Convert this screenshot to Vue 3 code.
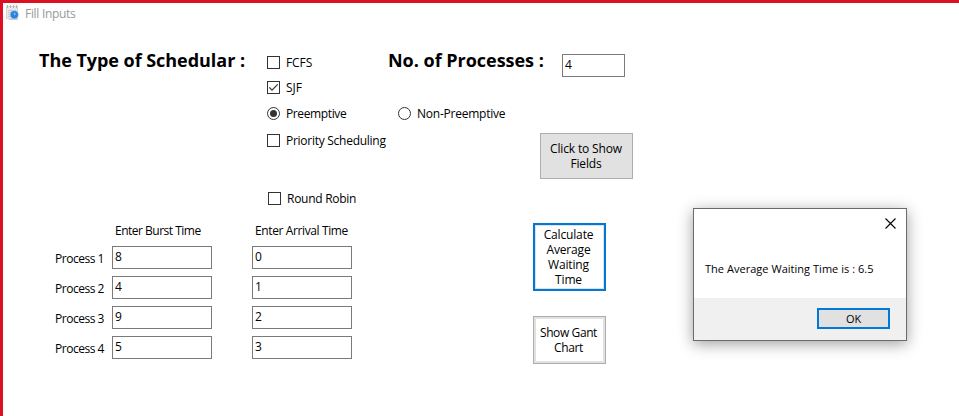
<script setup>
import { ref } from 'vue'

const processCount = ref('4')
const rows = ref([
  { name: 'Process 1', burst: '8', arrival: '0' },
  { name: 'Process 2', burst: '4', arrival: '1' },
  { name: 'Process 3', burst: '9', arrival: '2' },
  { name: 'Process 4', burst: '5', arrival: '3' },
])
const calculateLines = ['Calculate', 'Average', 'Waiting', 'Time']
const ganttLines = ['Show Gant', 'Chart']
const fieldLines = ['Click to Show', 'Fields']
</script>

<template>
  <div class="window">
    <header class="titlebar">
      <svg class="app-icon" width="14" height="17" viewBox="0 0 14 17">
        <rect x="0.5" y="2.5" width="11" height="12" fill="#e9e9e9" stroke="#d6d6d6" />
        <path d="M1.5 1v3M4.5 1v3M7.5 1v3M10.5 1v3" stroke="#b5b5b5" />
        <path d="M2 6.5h8M2 8.5h8M2 10.5h5M2 12.5h5" stroke="#c8c8c8" />
        <path d="M3 15.5h9" stroke="#cccccc" />
        <circle cx="8.3" cy="10.8" r="4.5" fill="#a9c9ef" />
        <circle cx="8.3" cy="10.8" r="3.7" fill="#2c80df" />
        <path d="M8.3 8.5v2.3l1.7-1" fill="none" stroke="#83c4fa" />
      </svg>
      <span class="title">Fill Inputs</span>
    </header>

    <section class="options">
      <h1 class="heading type">The Type of Schedular :</h1>
      <label class="choice fcfs"><i class="box"></i><span>FCFS</span></label>
      <div class="count">
        <h1 class="heading number">No. of Processes :</h1>
        <input v-model="processCount" class="field small" />
      </div>
      <label class="choice sjf">
        <i class="box"><svg width="11" height="11" viewBox="0 0 11 11"><path d="M1.3 5.4 4 8.1 9.7 2.4" fill="none" stroke="#333" stroke-width="1.2" /></svg></i>
        <span>SJF</span>
      </label>
      <label class="choice pre"><i class="box round"><b class="dot"></b></i><span>Preemptive</span></label>
      <label class="choice nonpre"><i class="box round"></i><span>Non-Preemptive</span></label>
      <label class="choice priority"><i class="box"></i><span>Priority Scheduling</span></label>
      <button class="btn show-fields"><span v-for="line in fieldLines" :key="line" class="line">{{ line }}</span></button>
      <label class="choice robin"><i class="box"></i><span>Round Robin</span></label>
    </section>

    <section class="lower">
      <div class="table">
        <div class="row head">
          <span class="col burst">Enter Burst Time</span>
          <span class="col arrival">Enter Arrival Time</span>
        </div>
        <div v-for="row in rows" :key="row.name" class="row">
          <span class="name">{{ row.name }}</span>
          <input v-model="row.burst" class="field" />
          <input v-model="row.arrival" class="field" />
        </div>
      </div>
      <div class="actions">
        <button class="btn calculate"><span v-for="line in calculateLines" :key="line" class="line">{{ line }}</span></button>
        <button class="btn gantt"><span v-for="line in ganttLines" :key="line" class="line">{{ line }}</span></button>
      </div>
    </section>

    <div class="dialog">
      <div class="dialog-top">
        <svg class="close" width="11" height="11" viewBox="0 0 11 11"><path d="M.5.5l10 10M10.5.5l-10 10" stroke="#000" stroke-width="1.1" /></svg>
      </div>
      <div class="message"><span>The Average Waiting Time is : 6.5</span></div>
      <div class="dialog-foot"><button class="btn ok">OK</button></div>
    </div>
  </div>
</template>

<style>
body { margin: 0; overflow: hidden; }
</style>

<style scoped>
* { box-sizing: border-box; }
.window {
  position: relative;
  width: 959px;
  height: 416px;
  border-top: 3px solid #db1022;
  border-left: 3px solid #db1022;
  background: #fff;
  color: #000;
  font: 12px/15px "Open Sans", "Noto Sans", sans-serif;
  white-space: nowrap;
  overflow: hidden;
}
.titlebar { display: flex; height: 47px; padding: 0 0 0 3px; }
.app-icon { display: block; margin-top: 1px; }
.title { margin: 3px 0 0 5px; color: #999; letter-spacing: -0.3px; }
.options {
  display: grid;
  grid-template-columns: 228px 121px 152px 1fr;
  grid-template-rows: 25px 25px 27px 27px 31px 27px;
  padding-left: 36px;
}
.heading { margin: 0; font-size: 18px; line-height: 20px; font-weight: 700; }
.type { grid-area: 1 / 1; letter-spacing: -0.04px; }
.number { width: 174px; letter-spacing: -0.02px; }
.count { grid-area: 1 / 3 / 2 / 5; display: flex; }
.choice { display: flex; align-items: center; gap: 6px; letter-spacing: -0.27px; }
.box {
  display: block;
  flex: none;
  width: 13px;
  height: 13px;
  border: 1px solid #333;
  background: #fff;
}
.box svg { display: block; }
.round { border-radius: 50%; padding: 2px; }
.dot { display: block; width: 7px; height: 7px; border-radius: 50%; background: #333; }
.fcfs { grid-area: 1 / 2; letter-spacing: -0.1px; }
.sjf { grid-area: 2 / 2; letter-spacing: 0; }
.pre { grid-area: 3 / 2; letter-spacing: -0.38px; }
.nonpre { grid-area: 3 / 3; padding-left: 10px; letter-spacing: -0.23px; }
.priority { grid-area: 4 / 2; }
.robin { grid-area: 6 / 2; padding-left: 1px; }
.field {
  display: block;
  width: 100px;
  height: 23px;
  margin: 0;
  padding: 0 2px 2px;
  border: 1px solid #7a7a7a;
  border-radius: 0;
  background: #fff;
  color: #000;
  font: inherit;
  outline: none;
}
.small { width: 63px; margin-top: 4px; }
.btn {
  display: flex;
  flex-direction: column;
  align-items: center;
  justify-content: center;
  margin: 0;
  padding: 0;
  border: 1px solid #adadad;
  border-radius: 0;
  background: #e1e1e1;
  color: #000;
  font: inherit;
  letter-spacing: -0.15px;
}
.line { display: block; height: 15px; }
.show-fields { grid-area: 4 / 4 / 6 / 5; width: 93px; height: 46px; margin-top: 6px; padding-right: 1px; }
.lower { display: flex; padding-left: 52px; }
.table { width: 478px; }
.row {
  display: grid;
  grid-template-columns: 57px 140px 100px;
  height: 30px;
}
.head { height: 34px; padding-top: 11px; }
.burst { grid-column: 2; padding-left: 3px; letter-spacing: -0.5px; }
.arrival { grid-column: 3; padding-left: 3px; letter-spacing: -0.38px; }
.name { padding-top: 5px; letter-spacing: -0.48px; }
.actions { display: flex; flex-direction: column; gap: 25px; padding-top: 11px; }
.calculate { width: 73px; height: 68px; padding-right: 2px; border: 2px solid #0078d7; background: #fff; box-shadow: inset 0 0 0 1px #e1e1e1; }
.gantt { width: 73px; height: 48px; padding-right: 2px; background: #fff; box-shadow: inset 0 0 0 2px #e1e1e1; letter-spacing: -0.4px; }
.dialog {
  position: absolute;
  left: 690px;
  top: 205px;
  display: flex;
  flex-direction: column;
  width: 214px;
  height: 133px;
  border: 1px solid #6b6b6b;
  background: #fff;
  box-shadow: 0 3px 14px rgba(0, 0, 0, 0.38);
  font-size: 11px;
}
.dialog-top { display: flex; justify-content: flex-end; height: 52px; padding: 9px 10px 0 0; }
.close { display: block; }
.message { flex: 1; padding-left: 11px; letter-spacing: 0.03px; }
.dialog-foot { display: flex; justify-content: flex-end; height: 42px; padding: 10px 16px 0 0; background: #f0f0f0; }
.ok { width: 73px; height: 21px; border: 2px solid #0078d7; }
</style>
